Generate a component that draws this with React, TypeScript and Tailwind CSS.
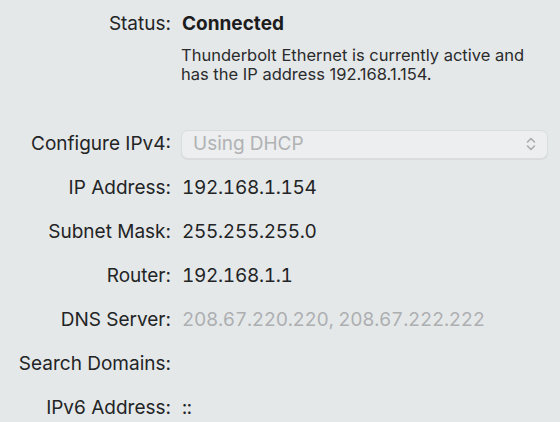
import React from "react";

const font = { fontFamily: "Inter, 'Noto Sans', sans-serif" };

function Row({ label, children }: { label: string; children?: React.ReactNode }) {
  return (
    <div className="flex h-[44px] items-center">
      <div className="w-[171px] shrink-0 text-right text-[19px] text-[#232425]">{label}</div>
      <div className="ml-[11px] flex min-w-0 flex-1 items-center text-[19px] tabular-nums tracking-[-0.3px] text-[#232425]">{children}</div>
    </div>
  );
}

export default function App() {
  return (
    <div className="h-[422px] w-[560px] overflow-hidden bg-[#e5e8e9] pt-[2px]" style={font}>
      <Row label="Status:">
        <span className="font-bold tracking-normal text-[#1c1c1d]">Connected</span>
      </Row>
      <div className="ml-[181px] mt-[0px] text-[16.5px] leading-[19px] text-[#2a2b2c]">
        Thunderbolt Ethernet is currently active and
        <br />
        has the IP address 192.168.1.154.
      </div>
      <div className="mt-[38px]">
        <Row label="Configure IPv4:">
          <div className="-ml-[1px] mr-[12px] flex h-[29px] flex-1 items-center justify-between rounded-[7px] border border-[#dadddf] bg-[#eceeef] pl-[11px] pr-[11px] shadow-[0_1px_1px_rgba(0,0,0,0.06)]">
            <span className="text-[19px] tracking-normal text-[#b0b2b4]">Using DHCP</span>
            <svg width="10" height="16" viewBox="0 0 10 16" fill="none" stroke="#a9abad" strokeWidth="1.6" strokeLinecap="round" strokeLinejoin="round">
              <path d="M1.5 6 L5 2.5 L8.5 6" />
              <path d="M1.5 10 L5 13.5 L8.5 10" />
            </svg>
          </div>
        </Row>
        <Row label="IP Address:">192.168.1.154</Row>
        <Row label="Subnet Mask:">255.255.255.0</Row>
        <Row label="Router:">192.168.1.1</Row>
        <Row label="DNS Server:">
          <span className="text-[#adafb1]">208.67.220.220, 208.67.222.222</span>
        </Row>
        <Row label="Search Domains:" />
        <Row label="IPv6 Address:">::</Row>
      </div>
    </div>
  );
}
